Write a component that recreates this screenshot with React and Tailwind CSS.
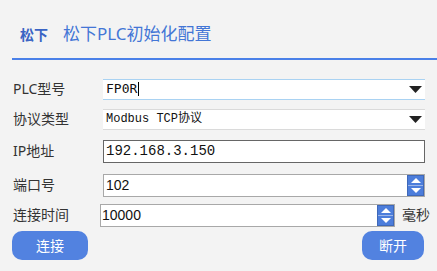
import React, { useState } from "react";

const font = { fontFamily: '"Noto Sans", "Noto Sans CJK SC", sans-serif' };

// 下拉箭头
const Caret = () => (
  <svg width="13" height="7" viewBox="0 0 13 7" className="shrink-0">
    <polygon points="0,0 13,0 6.5,7" fill="#222" />
  </svg>
);

// 上下微调按钮
const Spin = () => (
  <div className="flex flex-col w-[17px] shrink-0 h-full bg-[#4c7ddb] border border-[#3f68b8]">
    <div className="flex-1 flex items-center justify-center border-b border-[#9db5e6]">
      <svg width="10" height="5" viewBox="0 0 10 5">
        <polygon points="0,5 10,5 5,0" fill="#fff" />
      </svg>
    </div>
    <div className="flex-1 flex items-center justify-center">
      <svg width="10" height="5" viewBox="0 0 10 5">
        <polygon points="0,0 10,0 5,5" fill="#fff" />
      </svg>
    </div>
  </div>
);

const Label = ({ children }) => (
  <div className="w-[90px] shrink-0 text-[14px] text-[#333] leading-none">{children}</div>
);

const App = () => {
  const [model] = useState("FP0R");
  const [protocol] = useState("Modbus TCP协议");
  const [ip, setIp] = useState("192.168.3.150");
  const [port, setPort] = useState("102");
  const [timeout, setTimeoutMs] = useState("10000");

  return (
    <div className="w-[437px] h-[271px] bg-[#f3f3f3] overflow-hidden" style={font}>
      {/* 标题 */}
      <div className="flex items-center h-[58px] pl-[20px] pt-[10px]">
        <span className="text-[14px] font-bold text-[#3a64c4]">松下</span>
        <span className="ml-[15px] text-[17px] text-[#4376d6]">松下PLC初始化配置</span>
      </div>
      <div className="ml-[12px] h-[1.5px] bg-[#4a80e8]" />

      <div className="pl-[13px] pr-[12px]">
        {/* PLC型号 */}
        <div className="flex items-center mt-[19px] h-[21px]">
          <Label>PLC型号</Label>
          <div className="flex-1 h-full flex items-center justify-between bg-white border-y border-[#a9d2f2] pl-[3px] pr-[3px]">
            <span className="text-[13px] text-[#111] leading-none" style={{ fontFamily: '"DejaVu Sans Mono", monospace' }}>
              {model}
              <span className="inline-block w-[1px] h-[14px] bg-black align-middle ml-[1px]" />
            </span>
            <Caret />
          </div>
        </div>

        {/* 协议类型 */}
        <div className="flex items-center mt-[9px] h-[21px]">
          <Label>协议类型</Label>
          <div className="flex-1 h-full flex items-center justify-between bg-white border-y border-[#dadada] pl-[3px] pr-[3px]">
            <span className="text-[12px] text-[#111] leading-none" style={{ fontFamily: '"Liberation Mono", "Noto Sans CJK SC", monospace' }}>
              {protocol}
            </span>
            <Caret />
          </div>
        </div>

        {/* IP地址 */}
        <div className="flex items-center mt-[10px] h-[23px]">
          <Label>IP地址</Label>
          <input
            value={ip}
            onChange={(e) => setIp(e.target.value)}
            className="flex-1 min-w-0 h-full bg-white border border-[#666] px-[2px] text-[14px] text-[#111] outline-none"
            style={{ fontFamily: '"Liberation Mono", monospace' }}
          />
        </div>

        {/* 端口号 */}
        <div className="flex items-center mt-[11px] h-[23px]">
          <Label>端口号</Label>
          <div className="flex-1 h-full flex bg-white border border-[#a8a8a8]">
            <input
              value={port}
              onChange={(e) => setPort(e.target.value)}
              className="flex-1 min-w-0 px-[2px] text-[14px] text-[#111] outline-none bg-transparent"
              style={{ fontFamily: '"Liberation Sans", sans-serif' }}
            />
            <Spin />
          </div>
        </div>

        {/* 连接时间 */}
        <div className="flex items-center mt-[7px] h-[23px] -mr-[12px]">
          <div className="w-[87px] shrink-0 text-[14px] text-[#333] leading-none">连接时间</div>
          <div className="w-[295px] shrink-0 h-full flex bg-white border border-[#a8a8a8]">
            <input
              value={timeout}
              onChange={(e) => setTimeoutMs(e.target.value)}
              className="flex-1 min-w-0 px-[1px] text-[14px] text-[#111] outline-none bg-transparent"
              style={{ fontFamily: '"Liberation Sans", sans-serif' }}
            />
            <Spin />
          </div>
          <span className="ml-[7px] shrink-0 whitespace-nowrap text-[14px] text-[#333] leading-none">毫秒</span>
        </div>

        {/* 按钮 */}
        <div className="flex justify-between mt-[4px] pr-[1px]">
          <button className="w-[76px] h-[29px] -ml-[1px] rounded-[10px] bg-[#5282e0] text-white text-[14px]">
            连接
          </button>
          <button className="w-[62px] h-[29px] rounded-[10px] bg-[#5282e0] text-white text-[14px]">
            断开
          </button>
        </div>
      </div>
    </div>
  );
};

export default App;
